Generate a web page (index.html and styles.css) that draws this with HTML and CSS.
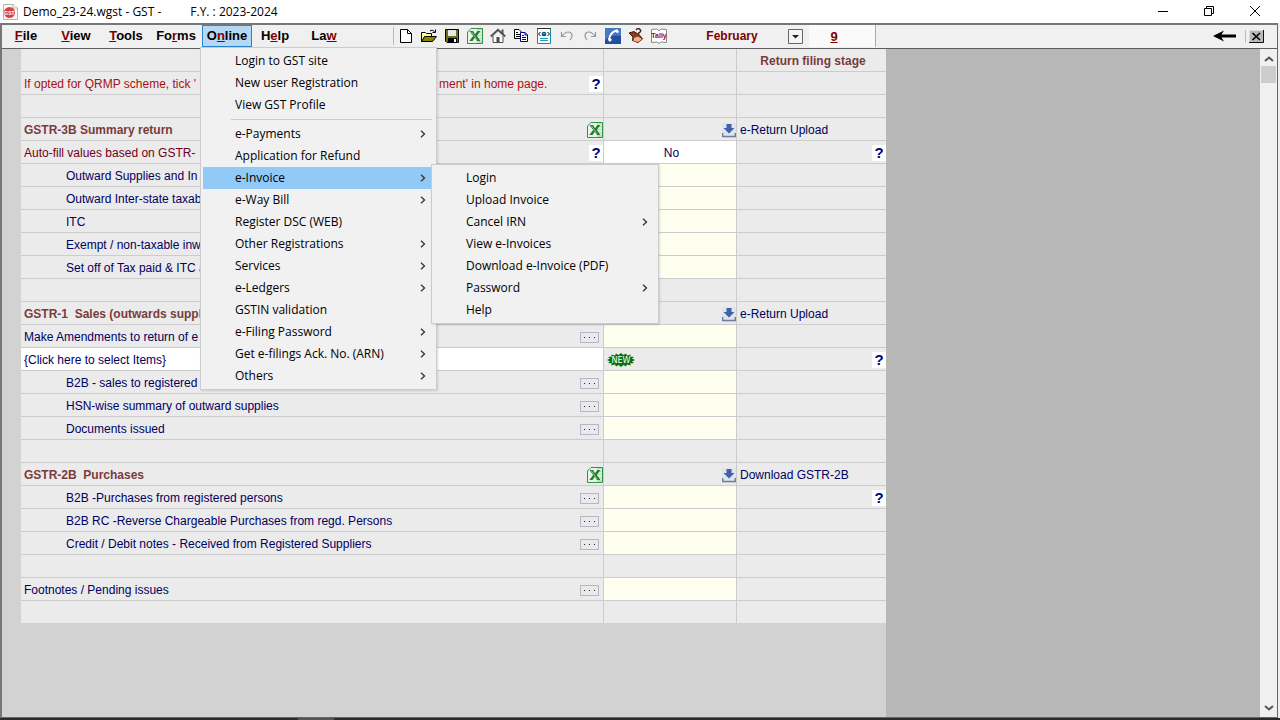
FILE: index.html
```html
<!DOCTYPE html>
<html lang="en">
<head>
<meta charset="utf-8">
<title>Demo_23-24.wgst - GST</title>
<link rel="stylesheet" href="styles.css">
</head>
<body>
<svg class="defs" aria-hidden="true">
  <symbol id="excel" viewBox="0 0 16 16"><path d="M4 .5H15.500V15.500H.5V4Z" fill="#e9f6e6" stroke="#2f9448"/><path d="M10 1h5v14h-5z" fill="#b9dfb4"/><path d="M11 3h4M11 6h4M11 9h4M11 12h4" stroke="#fff"/><path d="M2.500 3h3.500l2 3.200L10.500 3h3L9.700 8l3.800 5H10L7.800 9.800 5.500 13H2.300l3.900-5z" fill="#207a34"/><path d="M4.500 4l5.500 8" stroke="#8fcb7c"/></symbol>
  <symbol id="dl" viewBox="0 0 14 15"><path d="M0 0h14v15H0z" fill="#e0e4ec"/><path d="M4.500 1h5v4h3L7 10.500 1.500 5h3z" fill="#3f62a8"/><path d="M.7 10V13.500H13.300V10" fill="none" stroke="#6d7f9f" stroke-width="1.400"/></symbol>
  <symbol id="chev" viewBox="0 0 6 8"><path d="M1 .8L4.500 4 1 7.200" fill="none" stroke="#333" stroke-width="1.300"/></symbol>
</svg>
<div class="app">
  <header class="titlebar">
    <svg class="appicon" viewBox="0 0 16 16"><path d="M1.500.5H11L15.500 4V15.500H1.500Z" fill="#fafafa" stroke="#b9b4a8"/><path d="M11 .5V4h4.500" fill="#fff" stroke="#b9b4a8"/><circle cx="7.500" cy="8.500" r="5.500" fill="#d8433b"/><text x="7.500" y="10.500" class="appicon-text">GST</text></svg>
    <span class="doc">Demo_23-24.wgst - GST -</span><span>F.Y. : 2023-2024</span>
    <div class="winbtns">
      <button aria-label="Minimize"><svg viewBox="0 0 12 12"><path d="M1 6.500H11" /></svg></button>
      <button aria-label="Restore"><svg viewBox="0 0 12 12"><path d="M1.500 3.500H8.500V10.500H1.500ZM3.500 3.500V1.500H10.500V8.500H8.500"/></svg></button>
      <button aria-label="Close"><svg viewBox="0 0 12 12"><path d="M1 1L11 11M11 1L1 11"/></svg></button>
    </div>
  </header>
  <div class="frame">
    <nav class="menubar">
      <div class="menus">
        <button><u>F</u>ile</button>
        <button><u>V</u>iew</button>
        <button><u>T</u>ools</button>
        <button>Fo<u>r</u>ms</button>
        <div class="open">
          <button class="active">O<u>n</u>line</button>
          <div class="menu">
            <button>Login to GST site</button>
            <button>New user Registration</button>
            <button>View GST Profile</button>
            <hr>
            <button>e-Payments<svg><use href="#chev"/></svg></button>
            <button>Application for Refund</button>
            <div class="parent">
              <button class="current">e-Invoice<svg><use href="#chev"/></svg></button>
              <div class="menu submenu">
                <button>Login</button>
                <button>Upload Invoice</button>
                <button>Cancel IRN<svg><use href="#chev"/></svg></button>
                <button>View e-Invoices</button>
                <button>Download e-Invoice (PDF)</button>
                <button>Password<svg><use href="#chev"/></svg></button>
                <button>Help</button>
              </div>
            </div>
            <button>e-Way Bill<svg><use href="#chev"/></svg></button>
            <button>Register DSC (WEB)</button>
            <button>Other Registrations<svg><use href="#chev"/></svg></button>
            <button>Services<svg><use href="#chev"/></svg></button>
            <button>e-Ledgers<svg><use href="#chev"/></svg></button>
            <button>GSTIN validation</button>
            <button>e-Filing Password<svg><use href="#chev"/></svg></button>
            <button>Get e-filings Ack. No. (ARN)<svg><use href="#chev"/></svg></button>
            <button>Others<svg><use href="#chev"/></svg></button>
          </div>
        </div>
        <button>H<u>e</u>lp</button>
        <button>La<u>w</u></button>
      </div>
      <div class="tools">
        <button aria-label="New"><svg viewBox="0 0 16 16"><path d="M2.500 1.500H9.500L13.500 5.500V14.500H2.500Z" fill="#fff" stroke="#000"/><path d="M9.500 1.500V5.500H13.500" fill="none" stroke="#000"/></svg></button>
        <button aria-label="Open"><svg viewBox="0 0 16 16"><path d="M.5 13.500V4.500H4.500L5.500 5.500H10.500V8" fill="#ffff9c" stroke="#000"/><path d="M.5 13.500L3.500 8.500H15.500L11.500 13.500Z" fill="#848400" stroke="#000"/><path d="M9 3Q11 1 13.500 3.500M14.500 1.500V4.500H11.500" fill="none" stroke="#000"/></svg></button>
        <button aria-label="Save"><svg viewBox="0 0 16 16"><path d="M1.500 1.500H14.500V14.500H3L1.500 13Z" fill="#6f6f18" stroke="#000"/><path d="M4 2h8v6H4z" fill="#e8e8e8"/><path d="M4 10h9v4H4z" fill="#000"/><path d="M10 11h2v3h-2z" fill="#fff"/></svg></button>
        <button aria-label="Export to Excel"><svg><use href="#excel"/></svg></button>
        <button aria-label="Home"><svg viewBox="0 0 16 16"><path d="M3 8V14.500H13V8" fill="#f8f8f8" stroke="#555"/><path d="M11.500 1.500h2V6h-2z" fill="#555"/><path d="M.8 8.500L8 1.800 15.200 8.500" fill="none" stroke="#505050" stroke-width="2"/><path d="M6.500 9h3v6h-3z" fill="#4a4a4a"/></svg></button>
        <button aria-label="Copy"><svg viewBox="0 0 16 16"><path d="M1.500 1.500H6L8.500 4V10.500H1.500Z" fill="#fff" stroke="#000"/><path d="M3 4.500h2M3 6.500h4M3 8.500h4" stroke="#000"/><path d="M7.500 4.500H12L14.500 7V13.500H7.500Z" fill="#fff" stroke="#000084"/><path d="M12 4.500V7h2.500M9 7.500h2M9 9.500h4M9 11.500h4" stroke="#000084" fill="none"/></svg></button>
        <button aria-label="View report"><svg viewBox="0 0 16 16"><path d="M1.500.5H14.500V15.500H1.500Z" fill="#fff" stroke="#158db0"/><path d="M1 .5h14" stroke="#333"/><path d="M4.500 4L2.500 6 4.500 8M11.500 4l2 2-2 2" fill="none" stroke="#000"/><circle cx="8" cy="6" r="2.300" fill="#00517e"/><circle cx="8" cy="5.500" r=".8" fill="#69d9ed"/><path d="M4 10.500h8M4 12.500h8" stroke="#159fbd"/></svg></button>
        <button aria-label="Undo"><svg viewBox="0 0 16 16"><path d="M2.500 4V8.500H7M3 8Q8 2 12 5 14.500 8 11 12" fill="none" stroke="#999" stroke-width="1.200"/></svg></button>
        <button aria-label="Redo"><svg viewBox="0 0 16 16"><path d="M13.500 4V8.500H9M13 8Q8 2 4 5 1.500 8 5 12" fill="none" stroke="#999" stroke-width="1.200"/></svg></button>
        <button aria-label="Call"><svg viewBox="0 0 16 16"><path d="M0 0h16v16H0z" fill="#244f9e"/><path d="M0 0h16v8Q7 6 0 12z" fill="#4777c5"/><path d="M12 2.500Q4.500 4 4 12.500" fill="none" stroke="#fff" stroke-width="1.800"/><path d="M9.500 2l3-.5 1.500 2.500-2 1.200zM3 10.500l2.500-.5 1.500 2-2.500 2z" fill="#fff"/></svg></button>
        <button aria-label="Ask"><svg viewBox="0 0 16 16"><path d="M1 5L6 3.500 12 7.500 14.500 11 10 14.500 4.500 12.500 5 9Z" fill="#8a3b24" stroke="#421708"/><path d="M6 10l4-1.500 4 2.500-3.500 3-5-1z" fill="#f3b184"/><path d="M8 2q2-2.500 4-.5t-2 4" fill="none" stroke="#502112" stroke-width="1.500"/></svg></button>
        <button aria-label="Tally"><svg viewBox="0 0 16 16"><path d="M.5 1.500L6 1 8 3 10 1 15.500 1.500V14.500L10 14 8 15.500 6 14 .5 14.500Z" fill="#fff" stroke="#888"/><text x="8" y="10" class="tally">Tally</text></svg></button>
      </div>
      <div class="period">
        <select aria-label="Month"><option>February</option></select>
        <svg viewBox="0 0 15 15" aria-hidden="true"><path d="M.5.500H14.500V14.500H.5Z" fill="#f5f5f5" stroke="#666"/><path d="M4 6h7L7.500 9.500z" fill="#222"/></svg>
      </div>
      <input class="count" aria-label="Return number" value="9">
      <div class="right">
        <button aria-label="Back"><svg class="back" viewBox="0 0 24 12"><path d="M0 6L11 .5 8.500 4.500H23V7.500H8.500L11 11.500Z"/></svg></button>
        <button class="shut" aria-label="Close form"><svg viewBox="0 0 15 13"><path d="M0 0h15v13H0z" fill="#b9b9b9"/><path d="M.5 13V.5H14" fill="none" stroke="#ddd"/><path d="M14.500 0V12.500H0" fill="none" stroke="#111"/><path d="M3.500 3L11 10M11 3L3.500 10" stroke="#000" stroke-width="1.700"/></svg></button>
      </div>
    </nav>
    <div class="work">
      <main class="sheet">
        <table>
          <colgroup><col class="c1"><col class="c2"><col></colgroup>
          <tr><td></td><td></td><th class="center">Return filing stage</th></tr>
          <tr><td class="red"><div><span class="note">If opted for QRMP scheme, tick '</span><span>ment' in home page.</span><button class="q">?</button></div></td><td></td><td></td></tr>
          <tr><td></td><td></td><td></td></tr>
          <tr><th><div><span>GSTR-3B Summary return</span><button class="ic" aria-label="Excel"><svg><use href="#excel"/></svg></button></div></th><td><div><button class="ic dl" aria-label="Upload"><svg><use href="#dl"/></svg></button></div></td><td><a href="#">e-Return Upload</a></td></tr>
          <tr><td class="maroon"><div><span>Auto-fill values based on GSTR-</span><button class="q">?</button></div></td><td class="white center">No</td><td><div><button class="q">?</button></div></td></tr>
          <tr><td class="sub">Outward Supplies and In</td><td class="cream"></td><td></td></tr>
          <tr><td class="sub">Outward Inter-state taxab</td><td class="cream"></td><td></td></tr>
          <tr><td class="sub">ITC</td><td class="cream"></td><td></td></tr>
          <tr><td class="sub">Exempt / non-taxable inw</td><td class="cream"></td><td></td></tr>
          <tr><td class="sub">Set off of Tax paid &amp; ITC a</td><td class="cream"></td><td></td></tr>
          <tr><td></td><td></td><td></td></tr>
          <tr><th>GSTR-1 &nbsp;Sales (outwards suppl</th><td><div><button class="ic dl" aria-label="Upload"><svg><use href="#dl"/></svg></button></div></td><td><a href="#">e-Return Upload</a></td></tr>
          <tr><td><div><span>Make Amendments to return of e</span><button class="dots" aria-label="More"><i></i><i></i><i></i></button></div></td><td class="cream"></td><td></td></tr>
          <tr><td class="white">{Click here to select Items}</td><td><svg class="new" viewBox="0 0 28 14"><path d="M0 7l3-1.500L1 4l4-.5L4 1.500l4 1L9 .5l2.500 1.500L14 0l2.500 2L19 .5l1 2 4-1-1 2 4 .5-2 1.500L28 7l-3 1.500 2 1.500-4 .5 1 2-4-1-1 2-2.500-1.500L14 14l-2.500-2L9 13.500l-1-2-4 1 1-2-4-.5 2-1.500z" fill="#0b720b"/><text x="14" y="10">NEW</text></svg></td><td><div><button class="q">?</button></div></td></tr>
          <tr><td class="sub"><div><span>B2B - sales to registered</span><button class="dots" aria-label="More"><i></i><i></i><i></i></button></div></td><td class="cream"></td><td></td></tr>
          <tr><td class="sub"><div><span>HSN-wise summary of outward supplies</span><button class="dots" aria-label="More"><i></i><i></i><i></i></button></div></td><td class="cream"></td><td></td></tr>
          <tr><td class="sub"><div><span>Documents issued</span><button class="dots" aria-label="More"><i></i><i></i><i></i></button></div></td><td class="cream"></td><td></td></tr>
          <tr><td></td><td></td><td></td></tr>
          <tr><th><div><span>GSTR-2B &nbsp;Purchases</span><button class="ic" aria-label="Excel"><svg><use href="#excel"/></svg></button></div></th><td><div><button class="ic dl" aria-label="Download"><svg><use href="#dl"/></svg></button></div></td><td><a href="#">Download GSTR-2B</a></td></tr>
          <tr><td class="sub"><div><span>B2B -Purchases from registered persons</span><button class="dots" aria-label="More"><i></i><i></i><i></i></button></div></td><td class="cream"></td><td><div><button class="q">?</button></div></td></tr>
          <tr><td class="sub"><div><span>B2B RC -Reverse Chargeable Purchases from regd. Persons</span><button class="dots" aria-label="More"><i></i><i></i><i></i></button></div></td><td class="cream"></td><td></td></tr>
          <tr><td class="sub"><div><span>Credit / Debit notes - Received from Registered Suppliers</span><button class="dots" aria-label="More"><i></i><i></i><i></i></button></div></td><td class="cream"></td><td></td></tr>
          <tr><td></td><td></td><td></td></tr>
          <tr><td><div><span>Footnotes / Pending issues</span><button class="dots" aria-label="More"><i></i><i></i><i></i></button></div></td><td class="cream"></td><td></td></tr>
          <tr class="last"><td></td><td></td><td></td></tr>
        </table>
      </main>
      <div class="void"></div>
      <div class="scroll">
        <svg viewBox="0 0 10 6"><path d="M1 5L5 1.500 9 5"/></svg>
        <div class="thumb"></div>
        <svg class="down" viewBox="0 0 10 6"><path d="M1 1L5 4.500 9 1"/></svg>
      </div>
    </div>
  </div>
  <footer class="taskbar"><div></div></footer>
</div>
</body>
</html>
```
FILE: styles.css
```css
* { box-sizing: border-box; }
body { margin: 0; background: #f0f0f0; color: #000; font: 12px/16px "Liberation Sans", Arial, sans-serif; }
button { border: 0; padding: 0; margin: 0; background: none; color: inherit; font: inherit; }
svg { display: block; }
.defs { position: absolute; width: 0; height: 0; }
.app { min-height: 100vh; display: flex; flex-direction: column; }

.titlebar { display: flex; align-items: center; height: 23px; padding-left: 2px; background: #fff; font: 12px/16px "Open Sans", "Noto Sans", sans-serif; }
.appicon { width: 16px; height: 16px; margin-right: 5px; }
.appicon-text { font: bold 5px "Liberation Sans", sans-serif; fill: #fff; text-anchor: middle; }
.doc { margin-right: 29px; }
.winbtns { display: flex; margin-left: auto; padding: 0 2px 2px 0; }
.winbtns button { width: 46px; height: 20px; display: grid; place-items: center; }
.winbtns svg { width: 12px; height: 12px; fill: none; stroke: #000; }

.frame { flex: 1; display: flex; flex-direction: column; margin-right: 2px; border: 2px solid #666; border-top-color: #777; border-right-width: 1px; border-bottom-width: 1px; border-left-color: #777; }
.menubar { display: flex; align-items: center; height: 24px; padding-bottom: 1px; background: #f0f0f0; border-bottom: 1px solid #5e5e5e; }
.menus { display: grid; grid-template-columns: repeat(5, 50px) 48px 50px; margin-left: -1px; font-size: 13px; font-weight: bold; }
.menus u, .count { color: #800000; }
.menus > button { height: 22px; padding-bottom: 1px; }
.menus .active { width: 50px; height: 22px; margin-left: 1px; padding-bottom: 1px; background: #b5d8f5; border: 1px solid #2a83cf; }
.open, .parent { position: relative; }
.menu { position: absolute; z-index: 2; top: 22px; left: -1px; width: 237px; padding: 2px; background: #f1f1f1; border: 1px solid #ccc; box-shadow: 1px 1px 2px #0002; font: 12px/16px "Open Sans", "Noto Sans", sans-serif; }
.menu button { display: flex; align-items: center; justify-content: space-between; width: 100%; height: 22px; padding: 0 8px 0 32px; text-align: left; white-space: nowrap; }
.menu button svg { width: 6px; height: 8px; }
.menu .current { background: #91c9f7; }
.menu hr { margin: 3px 2px 3px 28px; border: 0; border-top: 1px solid #ccc; }
.menu .submenu { top: -3px; left: 228px; width: 228px; }

.tools { display: flex; margin-left: 44px; border-left: 1px solid #bbb; }
.tools button { width: 23px; height: 18px; display: grid; place-items: center; }
.tools svg { width: 16px; height: 16px; }
.tally { font: bold 7px "Liberation Sans", sans-serif; fill: #a80020; text-anchor: middle; }
.period { display: flex; align-items: center; margin-left: 12px; }
.period select { width: 106px; border: 0; padding: 0 6px 0 0; appearance: none; background: none; color: #800000; font: bold 12px/16px "Liberation Sans", sans-serif; text-align-last: center; }
.period svg { width: 15px; height: 15px; }
.count { width: 67px; height: 22px; margin-left: 6px; padding: 0 16px 0 0; border: 0; border-right: 1px solid #aaa; background: #fafafa; font: bold 13px/16px "Liberation Sans", sans-serif; text-align: center; text-decoration: underline; }
.right { display: flex; align-items: center; gap: 8px; margin-left: auto; margin-right: 13px; }
.back { width: 24px; height: 12px; }
.shut { padding-left: 3px; border-left: 1px solid #bbb; }
.shut svg { width: 15px; height: 13px; }

.work { flex: 1; display: flex; background: #b7b7b7; }
.sheet { flex: 0 0 884px; padding-left: 19px; background: #d2d2d2; }
table { width: 100%; table-layout: fixed; border-spacing: 0; color: #000060; }
.c1 { width: 583px; }
.c2 { width: 133px; }
td, th { height: 23px; padding: 2px 0 0 3px; background: #ebebeb; border-right: 1px solid #ccc; border-bottom: 1px solid #ccc; text-align: left; white-space: nowrap; }
th { color: #7a3b3b; }
td:last-child, th:last-child { border-right: 0; }
.last td { height: 22px; border-bottom: 0; }
td > div, th > div { display: flex; align-items: center; justify-content: space-between; height: 16px; }
td a { color: inherit; text-decoration: none; }
.sub { padding-left: 45px; }
.red { color: #a81010; }
.note { flex: 0 0 415px; }
.maroon { color: #700018; }
.cream { background: #fffff0; }
.white { background: #fff; }
.center { text-align: center; }
.q { margin-left: auto; width: 14px; height: 16px; background: #fff; color: #000078; font-size: 15px; font-weight: bold; }
.ic { margin-left: auto; }
.ic svg { width: 16px; height: 16px; }
.ic.dl svg { width: 14px; height: 15px; }
.dots { display: flex; align-items: center; justify-content: center; gap: 4px; width: 19px; height: 11px; margin-right: 4px; border: 1px solid #b4b8c4; background: #e9e9ee; }
.dots i { width: 1px; height: 1px; background: #222; }
.new { width: 28px; height: 14px; }
.new text { font: 8px "DejaVu Sans", sans-serif; fill: #fff; text-anchor: middle; }
.void { flex: 1; }
.scroll { display: flex; flex-direction: column; align-items: center; width: 17px; padding: 7px 0 6px; background: #f0f0f0; }
.scroll svg { width: 10px; height: 6px; fill: none; stroke: #555; stroke-width: 2; }
.thumb { width: 15px; height: 17px; margin-top: 4px; background: #cdcdcd; }
.down { margin-top: auto; }
.taskbar { height: 2px; padding-left: 298px; background: #2b2b2b; }
.taskbar div { width: 36px; height: 2px; background: #555; }
```
